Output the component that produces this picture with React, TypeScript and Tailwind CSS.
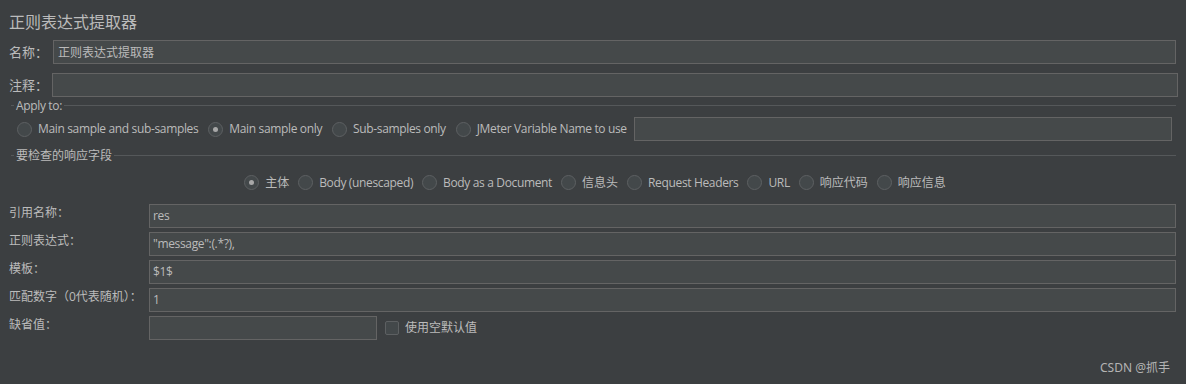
import React from "react";

const isAscii = (s: string) => /^[\x00-\x7f]*$/.test(s);

const Radio = ({ label, checked = false }: { label: string; checked?: boolean }) => (
  <div className="flex items-center gap-[6px] shrink-0">
    <div className="w-[15px] h-[15px] rounded-full border border-[#5d6062] bg-[#43484a] flex items-center justify-center">
      {checked && <div className="w-[5px] h-[5px] rounded-full bg-[#a8a8a8]" />}
    </div>
    <span className={`leading-[16px] whitespace-nowrap ${isAscii(label) ? "tracking-[-0.35px]" : ""}`}>{label}</span>
  </div>
);

const Input = ({ value = "", className = "" }: { value?: string; className?: string }) => (
  <div
    className={`h-[24px] border border-[#646464] bg-[#45494a] pl-[3px] flex items-center text-[12px] leading-[16px] text-[#bbbbbb] whitespace-nowrap ${
      isAscii(value) ? "tracking-[-0.35px]" : ""
    } ${className}`}
  >
    {value}
  </div>
);

const Separator = ({ label, className = "" }: { label: string; className?: string }) => (
  <div className={`flex items-center h-[17px] pl-[11px] pr-[10px] ${className}`}>
    <div className="w-[3px] h-px bg-[#55585a]" />
    <span className={`px-[2px] leading-[16px] whitespace-nowrap ${isAscii(label) ? "tracking-[-0.35px]" : ""}`}>
      {label}
    </span>
    <div className="flex-1 h-px bg-[#55585a]" />
  </div>
);

const FieldRow = ({ label, value }: { label: string; value: string }) => (
  <div className="flex items-start h-[24px] pl-[9px] pr-[10px]">
    <div className="w-[140px] leading-[16px] pt-[1px] whitespace-nowrap">{label}</div>
    <Input value={value} className="flex-1" />
  </div>
);

export default function App() {
  return (
    <div className="relative w-[1186px] h-[384px] overflow-hidden bg-[#3c3f41] text-[#bbbbbb] text-[12px] font-['Open_Sans','Noto_Sans_CJK_SC',sans-serif]">
      <div className="pl-[9px] pt-[11px] h-[40px] text-[16px] leading-[20px] font-['Noto_Sans_CJK_SC',sans-serif]">
        正则表达式提取器
      </div>

      <div className="flex items-center h-[24px] pl-[9px] pr-[10px]">
        <div className="w-[44px] text-[13px] leading-[16px] font-['Noto_Sans_CJK_SC',sans-serif]">名称：</div>
        <Input value="正则表达式提取器" className="flex-1 font-['Noto_Sans_CJK_SC',sans-serif] pl-[4px]" />
      </div>

      <div className="flex items-center h-[24px] mt-[9px] pl-[9px] pr-[8px]">
        <div className="w-[43px] text-[13px] leading-[16px] font-['Noto_Sans_CJK_SC',sans-serif]">注释：</div>
        <Input className="flex-1" />
      </div>

      <Separator label="Apply to:" />

      <div className="flex items-center h-[24px] mt-[3px] pl-[17px] pr-[14px] gap-[10px]">
        <Radio label="Main sample and sub-samples" />
        <Radio label="Main sample only" checked />
        <Radio label="Sub-samples only" />
        <Radio label="JMeter Variable Name to use" />
        <Input className="flex-1 -ml-[3px]" />
      </div>

      <Separator label="要检查的响应字段" className="mt-[6px]" />

      <div className="flex items-center justify-center h-[21px] mt-[8px] pl-[4px] gap-[9px]">
        <Radio label="主体" checked />
        <Radio label="Body (unescaped)" />
        <Radio label="Body as a Document" />
        <Radio label="信息头" />
        <Radio label="Request Headers" />
        <Radio label="URL" />
        <Radio label="响应代码" />
        <Radio label="响应信息" />
      </div>

      <div className="flex flex-col gap-[4px] mt-[11px]">
        <FieldRow label="引用名称：" value="res" />
        <FieldRow label="正则表达式：" value={'"message":(.*?),'} />
        <FieldRow label="模板：" value="$1$" />
        <FieldRow label="匹配数字（0代表随机）：" value="1" />
        <div className="flex items-start h-[24px] pl-[9px]">
          <div className="w-[140px] leading-[16px] pt-[1px] whitespace-nowrap">缺省值：</div>
          <Input className="w-[228px]" />
          <div className="flex items-center gap-[6px] ml-[8px] h-[24px]">
            <div className="w-[14px] h-[14px] rounded-[2px] border border-[#5d6062] bg-[#43484a]" />
            <span className="leading-[16px]">使用空默认值</span>
          </div>
        </div>
      </div>

      <div className="absolute right-[16px] top-[360px] text-[12px] leading-[16px] text-[#b4b4b4] font-['Noto_Sans','Noto_Sans_CJK_SC',sans-serif]">
        CSDN @抓手
      </div>
    </div>
  );
}
